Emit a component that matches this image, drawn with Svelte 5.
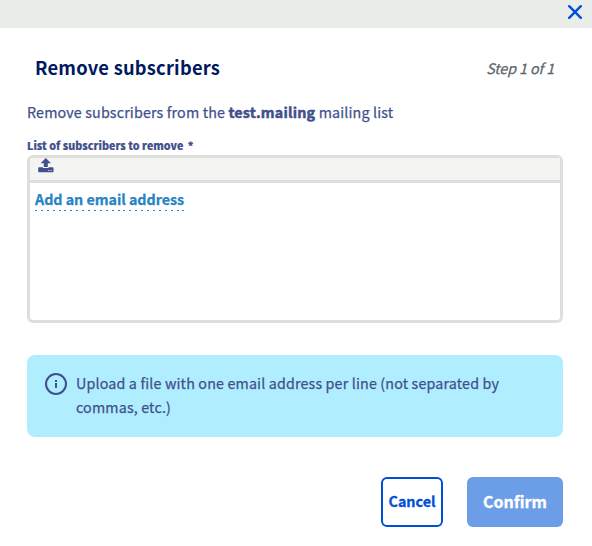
<script>
  const listName = 'test.mailing';
</script>

<div class="dialog">
  <div class="topbar">
    <button class="close" aria-label="Close">
      <svg width="14" height="14" viewBox="0 0 14 14"><path d="M1.2 1.2 12.8 12.8M12.8 1.2 1.2 12.8" /></svg>
    </button>
  </div>

  <header>
    <h1>Remove subscribers</h1>
    <em class="step">Step 1 of 1</em>
  </header>

  <main>
    <p class="intro">Remove subscribers from the <strong>{listName}</strong> mailing list</p>
    <div class="label">List of subscribers to remove <span class="star">*</span></div>
    <div class="editor">
      <div class="toolbar">
        <svg width="16" height="15" viewBox="0 0 16 15" fill="#41508c">
          <path d="M7.8 0 13 5.2H9.8V9H5.8V5.2H2.6Z" />
          <path fill-rule="evenodd" d="M1 9.2H5V10H10.6V9.2H14.6Q15.5 9.2 15.5 10.1V13.4Q15.5 14.2 14.6 14.2H1Q.2 14.2 .2 13.4V10.1Q.2 9.2 1 9.2ZM10.3 12V13H11.3V12ZM12.7 12V13H13.7V12Z" />
        </svg>
      </div>
      <div class="content"><span class="add">Add an email address</span></div>
    </div>

    <div class="info">
      <svg width="22" height="22" viewBox="0 0 22 22">
        <circle cx="11" cy="11" r="10" fill="none" stroke="#41508c" stroke-width="2" />
        <path d="M10 7H12V9H10ZM10 10H12V15H10Z" fill="#41508c" />
      </svg>
      <p>Upload a file with one email address per line (not separated by<br />commas, etc.)</p>
    </div>
  </main>

  <footer>
    <button class="cancel">Cancel</button>
    <button class="confirm">Confirm</button>
  </footer>
</div>

<style>
  :global(body) {
    background: #fff;
  }
  .dialog {
    height: 546px;
    box-sizing: border-box;
    overflow: hidden;
    font-family: "Noto Sans CJK SC", "Noto Sans", sans-serif;
    color: #41508c;
    white-space: nowrap;
  }
  button {
    font: inherit;
    padding: 0;
    margin: 0;
  }
  .topbar {
    height: 28px;
    background: #eaece9;
    display: flex;
    justify-content: flex-end;
    padding: 5px 10px 0 0;
    box-sizing: border-box;
  }
  .close {
    border: 0;
    background: none;
    width: 14px;
    height: 14px;
    display: flex;
  }
  .close path {
    stroke: #0050d7;
    stroke-width: 2.4;
    stroke-linecap: round;
  }
  header {
    height: 24px;
    padding: 27px 37px 0 35px;
    display: flex;
    justify-content: space-between;
    align-items: center;
  }
  h1 {
    margin: 0;
    font-size: 18.3px;
    letter-spacing: 0.24px;
    line-height: 24px;
    font-weight: 700;
    color: #00185e;
  }
  .step {
    font-size: 14.3px;
    letter-spacing: -0.1px;
    line-height: 24px;
    padding: 1px 1px 0 0;
    color: #5c666e;
    -webkit-text-stroke: 0.25px #5c666e;
  }
  main {
    padding: 21px 29px 0 27px;
  }
  p {
    margin: 0;
    font-size: 14.3px;
    line-height: 24px;
    letter-spacing: 0.15px;
    -webkit-text-stroke: 0.25px #41508c;
  }
  .intro {
    letter-spacing: 0.145px;
  }
  strong {
    letter-spacing: 0.2px;
    -webkit-text-stroke: 0.5px #41508c;
  }
  .label {
    margin-top: 13px;
    font-size: 10.7px;
    letter-spacing: 0.02px;
    line-height: 18px;
    font-weight: 900;
    -webkit-text-stroke: 0.2px #41508c;
  }
  .star {
    margin-left: 2px;
  }
  .editor {
    box-sizing: border-box;
    height: 168px;
    border: 3px solid #dddfda;
    border-radius: 6px;
  }
  .toolbar {
    height: 22px;
    background: #f4f4f2;
    border-bottom: 3px solid #dddfda;
    padding-left: 8px;
  }
  .toolbar svg {
    display: block;
  }
  .content {
    padding: 6px 5px;
    display: flex;
  }
  .add {
    font-size: 14.3px;
    letter-spacing: -0.03px;
    font-weight: 700;
    line-height: 20px;
    color: #2784c3;
    padding-bottom: 2px;
    -webkit-text-stroke: 0.25px #2784c3;
    background: repeating-linear-gradient(90deg, #2784c3 0 2px, transparent 2px 5.9px) bottom / 100% 1px no-repeat;
  }
  .info {
    margin-top: 32px;
    height: 82px;
    box-sizing: border-box;
    border-radius: 8px;
    background: #b0eeff;
    padding: 16px 18px;
    display: flex;
    gap: 9px;
  }
  .info svg {
    margin-top: 2px;
  }
  footer {
    padding: 40px 29px 0 0;
    display: flex;
    justify-content: flex-end;
    gap: 24px;
  }
  footer button {
    height: 50px;
    border-radius: 6px;
    box-sizing: border-box;
    font-weight: 700;
    padding-bottom: 3px;
  }
  .cancel {
    width: 62px;
    border: 2px solid #0050d7;
    background: #fff;
    color: #0050d7;
    font-size: 14.3px;
    -webkit-text-stroke: 0.3px #0050d7;
  }
  .confirm {
    width: 96px;
    border: 0;
    background: #6b9ee6;
    color: #fff;
    font-size: 16px;
    -webkit-text-stroke: 0.3px #fff;
  }
</style>
